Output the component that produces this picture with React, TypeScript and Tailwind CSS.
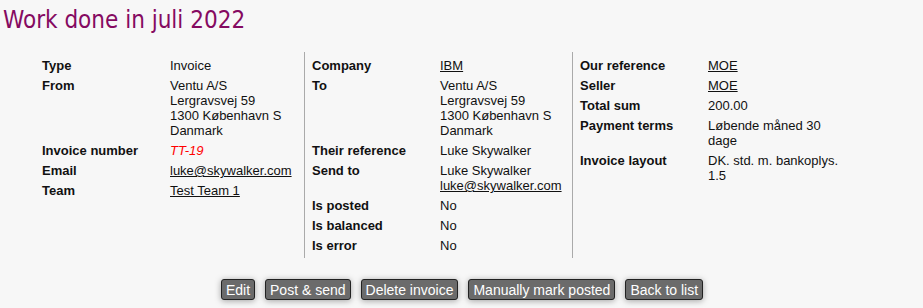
import React from 'react';

type Row = { label: string; value: React.ReactNode };

const link = (text: string) => <span className="underline">{text}</span>;

const col1: Row[] = [
  { label: 'Type', value: 'Invoice' },
  {
    label: 'From',
    value: (
      <>
        Ventu A/S
        <br />
        Lergravsvej 59
        <br />
        1300 København S
        <br />
        Danmark
      </>
    ),
  },
  { label: 'Invoice number', value: <span className="italic text-[#ff0000]">TT-19</span> },
  { label: 'Email', value: link('luke@skywalker.com') },
  { label: 'Team', value: link('Test Team 1') },
];

const col2: Row[] = [
  { label: 'Company', value: link('IBM') },
  {
    label: 'To',
    value: (
      <>
        Ventu A/S
        <br />
        Lergravsvej 59
        <br />
        1300 København S
        <br />
        Danmark
      </>
    ),
  },
  { label: 'Their reference', value: 'Luke Skywalker' },
  {
    label: 'Send to',
    value: (
      <>
        Luke Skywalker
        <br />
        {link('luke@skywalker.com')}
      </>
    ),
  },
  { label: 'Is posted', value: 'No' },
  { label: 'Is balanced', value: 'No' },
  { label: 'Is error', value: 'No' },
];

const col3: Row[] = [
  { label: 'Our reference', value: link('MOE') },
  { label: 'Seller', value: link('MOE') },
  { label: 'Total sum', value: '200.00' },
  { label: 'Payment terms', value: 'Løbende måned 30 dage' },
  { label: 'Invoice layout', value: 'DK. std. m. bankoplys. 1.5' },
];

function InfoColumn({ rows, className }: { rows: Row[]; className: string }) {
  return (
    <div className={className}>
      <div className="grid grid-cols-[128px_1fr] gap-y-[5px]">
        {rows.map((row) => (
          <React.Fragment key={row.label}>
            <div className="font-bold">{row.label}</div>
            <div>{row.value}</div>
          </React.Fragment>
        ))}
      </div>
    </div>
  );
}

const buttons = ['Edit', 'Post & send', 'Delete invoice', 'Manually mark posted', 'Back to list'];

export default function App() {
  return (
    <div className="min-h-screen w-full bg-[#f7f7f7] font-['Liberation_Sans',Arial,sans-serif] text-[13px] leading-[15px] text-[#111]">
      <h1 className="h-[52px] pl-[3px] pt-[4px] font-['DejaVu_Sans_Condensed','Open_Sans',sans-serif] text-[24px] leading-[32px] text-[#850a61]">
        Work done in juli 2022
      </h1>
      <div className="flex items-stretch">
        <InfoColumn rows={col1} className="ml-[42px] w-[263px] border-r border-[#aaa] pt-[6px] pb-[5px]" />
        <InfoColumn rows={col2} className="w-[268px] border-r border-[#aaa] pl-[7px] pt-[6px] pb-[5px]" />
        <InfoColumn rows={col3} className="w-[275px] pl-[7px] pt-[6px] pb-[5px]" />
      </div>
      <div className="mt-[21px] flex justify-center gap-[10px] pl-[1px]">
        {buttons.map((b) => (
          <button
            key={b}
            className="h-[21px] rounded-[3px] border border-[#222] bg-[#6b6b6b] px-[4px] text-[14px] leading-[16px] text-white shadow-[0_1px_6px_rgba(0,0,0,0.35)]"
          >
            {b}
          </button>
        ))}
      </div>
    </div>
  );
}
